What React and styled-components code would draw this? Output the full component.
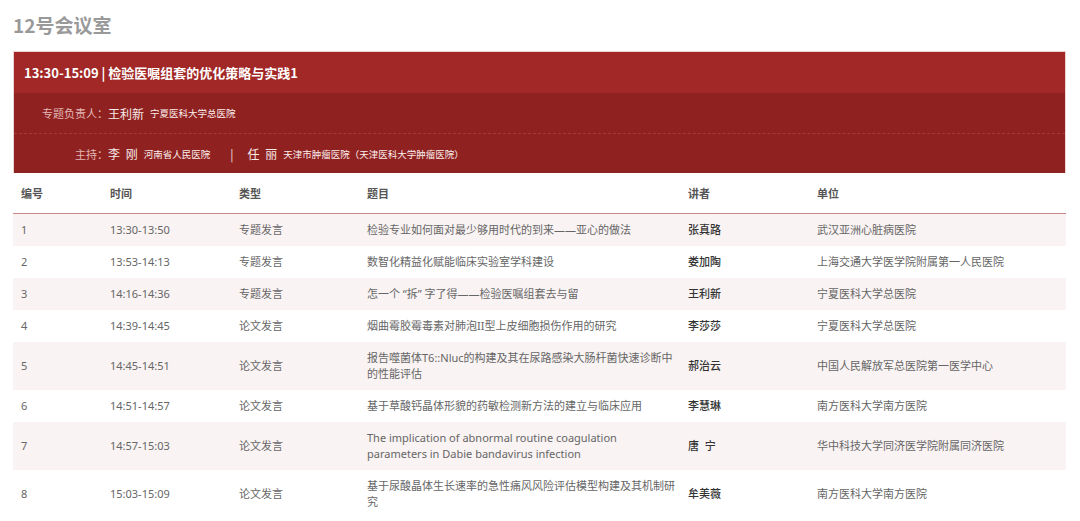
import React from 'react';
import styled, { createGlobalStyle } from 'styled-components';

const GlobalStyle = createGlobalStyle`
  body {
    margin: 0;
    background: #fff;
    font-family: "Noto Sans", "Noto Sans CJK SC", sans-serif;
  }
`;

const Page = styled.div`
  padding: 12px 14px 0 13px;
`;

const RoomTitle = styled.h1`
  margin: 0 0 13px;
  font-size: 19px;
  line-height: 26px;
  font-weight: 700;
  color: #999;
  font-family: "Noto Sans CJK SC", sans-serif;
`;

const SessionCard = styled.div`
  border: 1px solid #ecd3d3;
  border-bottom: none;
  background: #8f2220;
`;

const SessionHead = styled.div`
  height: 41px;
  display: flex;
  align-items: center;
  padding-left: 10px;
  background: #a12826;
  color: #fff;
  font-size: 13px;
  font-weight: 700;
  font-family: "Noto Sans CJK SC", sans-serif;
`;

const InfoRow = styled.div`
  height: 40px;
  display: flex;
  align-items: center;
  border-top: ${(p) => (p.$dashed ? '1px dashed #a43b39' : 'none')};
  box-sizing: border-box;
  font-family: "Noto Sans CJK SC", sans-serif;
`;

const Label = styled.span`
  width: 94px;
  text-align: right;
  font-size: 11px;
  color: #e3b7b6;
`;

const Name = styled.span`
  font-size: 12px;
  color: #f7eaea;
  margin-right: 6px;
  white-space: pre;
  word-spacing: 3px;
`;

const Org = styled.span`
  font-size: 9.5px;
  color: #fbeeee;
`;

const Divider = styled.span`
  color: #f1dcdc;
  font-size: 12px;
  margin: 0 14px 0 20px;
`;

const Table = styled.table`
  width: 100%;
  border-collapse: collapse;
  table-layout: fixed;
  font-size: 11px;
  line-height: 16px;
  color: #666;
`;

const HeadCell = styled.th`
  height: 40px;
  padding: 0 8px;
  text-align: left;
  font-weight: 700;
  color: #555;
  border-bottom: 1px solid #c98989;
  font-family: "Noto Sans CJK SC", sans-serif;
`;

const Row = styled.tr`
  background: ${(p) => (p.$striped ? '#f9f3f3' : '#fff')};
`;

const Cell = styled.td`
  padding: 8px ${(p) => (p.$wide ? '2px' : '8px')} 8px 8px;
  vertical-align: middle;
  color: ${(p) => (p.$strong ? '#333' : '#666')};
  font-weight: ${(p) => (p.$strong ? 500 : 400)};
  white-space: pre-wrap;
`;

const columns = [
  { title: '编号', width: 89 },
  { title: '时间', width: 129 },
  { title: '类型', width: 128 },
  { title: '题目', width: 321 },
  { title: '讲者', width: 129 },
  { title: '单位', width: 257 },
];

const talks = [
  ['1', '13:30-13:50', '专题发言', '检验专业如何面对最少够用时代的到来——亚心的做法', '张真路', '武汉亚洲心脏病医院'],
  ['2', '13:53-14:13', '专题发言', '数智化精益化赋能临床实验室学科建设', '娄加陶', '上海交通大学医学院附属第一人民医院'],
  ['3', '14:16-14:36', '专题发言', '怎一个 “拆” 字了得——检验医嘱组套去与留', '王利新', '宁夏医科大学总医院'],
  ['4', '14:39-14:45', '论文发言', '烟曲霉胶霉毒素对肺泡II型上皮细胞损伤作用的研究', '李莎莎', '宁夏医科大学总医院'],
  ['5', '14:45-14:51', '论文发言', '报告噬菌体T6::Nluc的构建及其在尿路感染大肠杆菌快速诊断中的性能评估', '郝治云', '中国人民解放军总医院第一医学中心'],
  ['6', '14:51-14:57', '论文发言', '基于草酸钙晶体形貌的药敏检测新方法的建立与临床应用', '李慧琳', '南方医科大学南方医院'],
  ['7', '14:57-15:03', '论文发言', 'The implication of abnormal routine coagulation parameters in Dabie bandavirus infection', '唐  宁', '华中科技大学同济医学院附属同济医院'],
  ['8', '15:03-15:09', '论文发言', '基于尿酸晶体生长速率的急性痛风风险评估模型构建及其机制研究', '牟美薇', '南方医科大学南方医院'],
];

export default function App() {
  return (
    <Page>
      <GlobalStyle />
      <RoomTitle>12号会议室</RoomTitle>
      <SessionCard>
        <SessionHead>13:30-15:09 | 检验医嘱组套的优化策略与实践1</SessionHead>
        <InfoRow>
          <Label>专题负责人：</Label>
          <Name>王利新</Name>
          <Org>宁夏医科大学总医院</Org>
        </InfoRow>
        <InfoRow $dashed>
          <Label>主持：</Label>
          <Name>李 刚</Name>
          <Org>河南省人民医院</Org>
          <Divider>|</Divider>
          <Name>任 丽</Name>
          <Org>天津市肿瘤医院（天津医科大学肿瘤医院）</Org>
        </InfoRow>
      </SessionCard>
      <Table>
        <colgroup>
          {columns.map((c) => (
            <col key={c.title} style={{ width: c.width }} />
          ))}
        </colgroup>
        <thead>
          <tr>
            {columns.map((c) => (
              <HeadCell key={c.title}>{c.title}</HeadCell>
            ))}
          </tr>
        </thead>
        <tbody>
          {talks.map((t, i) => (
            <Row key={t[0]} $striped={i % 2 === 0}>
              <Cell>{t[0]}</Cell>
              <Cell>{t[1]}</Cell>
              <Cell>{t[2]}</Cell>
              <Cell $wide>{t[3]}</Cell>
              <Cell $strong>{t[4]}</Cell>
              <Cell>{t[5]}</Cell>
            </Row>
          ))}
        </tbody>
      </Table>
    </Page>
  );
}
